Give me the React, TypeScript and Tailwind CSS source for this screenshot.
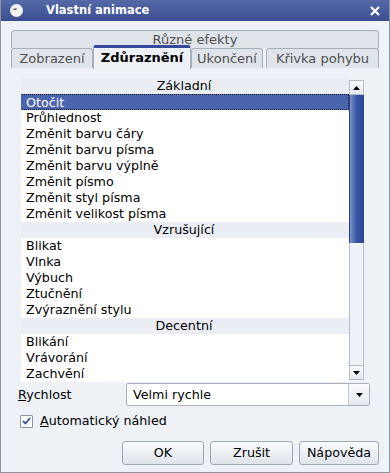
import React from "react";

const font = { fontFamily: '"DejaVu Sans", Verdana, sans-serif' };

function Row({ text, selected }: { text: string; selected?: boolean }) {
  if (selected) {
    return (
      <div className="h-[16px] leading-[15px] bg-[#4a64ad] text-white pl-[6px] border border-dotted border-[#1a1a1a] -ml-[2px]">
        {text}
      </div>
    );
  }
  return <div className="h-[16px] leading-[16px] pl-[5px] text-black">{text}</div>;
}

function Header({ text }: { text: string }) {
  return (
    <div className="h-[16px] leading-[16px] bg-[#eaeef4] text-center text-black -ml-[2px]">{text}</div>
  );
}

function Btn({ children, w }: { children: React.ReactNode; w: string }) {
  return (
    <div
      className={`${w} h-[24px] rounded-[3px] border border-[#9ea6b2] bg-gradient-to-b from-[#fbfcfd] to-[#dfe4ea] flex items-center justify-center text-black`}
    >
      {children}
    </div>
  );
}

export default function App() {
  return (
    <div
      className="w-[390px] h-[473px] bg-[#eef1f6] text-[12.7px] overflow-hidden flex flex-col border-l border-b border-r border-[#8e939c]"
      style={font}
    >
      {/* title bar */}
      <div className="h-[21px] shrink-0 bg-gradient-to-b from-[#5569a8] to-[#3a4f90] flex items-center pl-[8px] pr-[8px]">
        <svg width="15" height="15" viewBox="0 0 15 15">
          <circle cx="7.5" cy="7.5" r="6.5" fill="#f2f2f2" />
          <path d="M3 6 L8 5.5 L7 7 Z" fill="#222" />
        </svg>
        <div className="ml-[22px] text-white font-bold text-[11.5px]">Vlastní animace</div>
        <div className="flex-1" />
        <svg width="12" height="12" viewBox="0 0 12 12">
          <path d="M2 2 L10 10 M10 2 L2 10" stroke="#ffffff" strokeWidth="2.2" />
        </svg>
      </div>

      {/* tabs */}
      <div className="pt-[9px] px-[10px] shrink-0 text-[13px]">
        <div className="h-[18px] border border-b-0 border-[#a7afbb] rounded-t-[4px] bg-[#dfe4ea] text-center leading-[17px] text-[#505050]">
          Různé efekty
        </div>
        <div className="flex items-end h-[20px] relative">
          <div className="w-[82px] h-[20px] border border-[#a7afbb] border-b-0 rounded-t-[3px] bg-[#dfe4ea] text-[#505050] text-center leading-[19px]">
            Zobrazení
          </div>
          <div className="w-[98px] h-[24px] -mt-[4px] border-t-[3px] border-[#34499a] border-x border-x-[#a7afbb] rounded-t-[3px] bg-[#eef1f6] text-black font-bold text-center leading-[20px] relative z-10 mb-[-1px]">
            Zdůraznění
          </div>
          <div className="w-[72px] h-[20px] border border-[#a7afbb] border-b-0 rounded-t-[3px] bg-[#dfe4ea] text-[#505050] text-center leading-[19px]">
            Ukončení
          </div>
          <div className="flex-1 ml-[3px] h-[20px] border border-[#a7afbb] border-b-0 rounded-t-[3px] bg-[#dfe4ea] text-[#505050] text-center leading-[19px]">
            Křivka pohybu
          </div>
        </div>
      </div>

      {/* list */}
      <div className="flex mt-[10px] ml-[20px] mr-[25px] h-[304px] shrink-0">
        <div className="flex-1 bg-white overflow-hidden">
          <Header text="Základní" />
          <Row text="Otočit" selected />
          <Row text="Průhlednost" />
          <Row text="Změnit barvu čáry" />
          <Row text="Změnit barvu písma" />
          <Row text="Změnit barvu výplně" />
          <Row text="Změnit písmo" />
          <Row text="Změnit styl písma" />
          <Row text="Změnit velikost písma" />
          <Header text="Vzrušující" />
          <Row text="Blikat" />
          <Row text="Vlnka" />
          <Row text="Výbuch" />
          <Row text="Ztučnění" />
          <Row text="Zvýraznění stylu" />
          <Header text="Decentní" />
          <Row text="Blikání" />
          <Row text="Vrávorání" />
          <Row text="Zachvění" />
        </div>
        {/* scrollbar */}
        <div className="w-[15px] flex flex-col pt-[2px] pb-[2px] bg-[#eef1f6]">
          <div className="h-[15px] border border-[#b6bdc8] bg-gradient-to-b from-[#fbfcfd] to-[#e4e8ee] flex items-center justify-center">
            <svg width="7" height="4" viewBox="0 0 7 4"><path d="M0 4 L3.5 0 L7 4 Z" fill="#000" /></svg>
          </div>
          <div className="h-[148px] bg-gradient-to-r from-[#7d93c8] via-[#3655a5] to-[#2b4897] border-x border-[#2a4390]" />
          <div className="flex-1 border-x border-[#b6bdc8] bg-[#eef1f6]" />
          <div className="h-[15px] border border-[#b6bdc8] bg-gradient-to-b from-[#fbfcfd] to-[#e4e8ee] flex items-center justify-center">
            <svg width="7" height="4" viewBox="0 0 7 4"><path d="M0 0 L3.5 4 L7 0 Z" fill="#000" /></svg>
          </div>
        </div>
      </div>

      {/* speed */}
      <div className="flex items-center mt-[1px] h-[23px] shrink-0">
        <div className="w-[125px] pl-[17px] text-black">
          <span className="underline">R</span>ychlost
        </div>
        <div className="w-[244px] h-[23px] border border-[#a7afbb] rounded-[2px] bg-white flex items-center">
          <div className="flex-1 pl-[6px] text-black">Velmi rychle</div>
          <div className="w-[21px] h-[21px] border-l border-[#c3c9d2] bg-gradient-to-b from-[#fbfcfd] to-[#e4e8ee] flex items-center justify-center">
            <svg width="7" height="4" viewBox="0 0 7 4"><path d="M0 0 L3.5 4 L7 0 Z" fill="#000" /></svg>
          </div>
        </div>
      </div>

      {/* checkbox */}
      <div className="flex items-center mt-[8px] pl-[19px] h-[14px] shrink-0">
        <div className="w-[13px] h-[13px] border border-[#8d95a3] bg-white rounded-[1px] flex items-center justify-center">
          <svg width="9" height="8" viewBox="0 0 9 8">
            <path d="M1 4 L3.5 6.5 L8 1" stroke="#3a5199" strokeWidth="1.8" fill="none" />
          </svg>
        </div>
        <div className="ml-[7px] text-black">
          <span className="underline">A</span>utomatický náhled
        </div>
      </div>

      {/* buttons */}
      <div className="flex justify-end gap-[6px] mt-[13px] pr-[10px] shrink-0">
        <Btn w="w-[82px]">OK</Btn>
        <Btn w="w-[83px]">Zrušit</Btn>
        <Btn w="w-[80px]">Nápověda</Btn>
      </div>
    </div>
  );
}
